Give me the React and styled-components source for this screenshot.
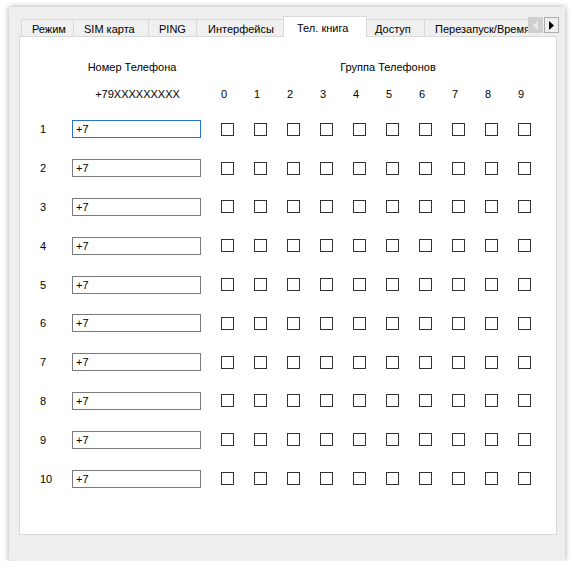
import React from 'react';
import styled, { createGlobalStyle } from 'styled-components';

const GlobalStyle = createGlobalStyle`
    html, body {
        margin: 0;
        padding: 0;
        background: #ffffff;
    }

    body {
        font-family: 'Liberation Sans', Arial, sans-serif;
        font-size: 11px;
        color: #000;
    }
`;

const Page = styled.div`
    padding: 7px 0 0 9px;
`;

const Window = styled.div`
    width: 556px;
    height: 554px;
    box-sizing: border-box;
    background: #eeeeee;
    box-shadow: 0 0 6px rgba(0, 0, 0, 0.35);
    padding: 9px 8px 26px 10px;
    display: flex;
    flex-direction: column;
`;

const TabBar = styled.div`
    display: flex;
    height: 21px;
    margin: 0 -2px -1px 0;
    position: relative;
    z-index: 1;
`;

const TabStrip = styled.div`
    flex: 1;
    display: flex;
    align-items: flex-end;
    padding-left: 2px;
    overflow: hidden;
`;

const Tab = styled.div`
    flex: none;
    box-sizing: border-box;
    width: ${p => p.$w}px;
    height: ${p => (p.$active ? 21 : 18)}px;
    margin: 0 ${p => (p.$active ? -2 : 0)}px;
    padding: ${p => (p.$active ? '2px' : '1px')} 0 0 ${p => p.$pad}px;
    white-space: nowrap;
    display: flex;
    align-items: center;
    background: ${p => (p.$active ? '#ffffff' : '#f0f0f0')};
    border: 1px solid #d9d9d9;
    border-bottom: ${p => (p.$active ? 'none' : '1px solid #d9d9d9')};
    border-left: ${p => (p.$first || p.$active ? '1px solid #d9d9d9' : 'none')};
    position: relative;
    z-index: ${p => (p.$active ? 2 : 1)};
`;

const ScrollButtons = styled.div`
    display: flex;
    gap: 1px;
    padding-top: 1px;
    align-self: flex-start;
`;

const ScrollButton = styled.div`
    width: 15px;
    height: 16px;
    box-sizing: border-box;
    display: flex;
    align-items: center;
    justify-content: center;
    background: ${p => (p.$disabled ? '#cfcfcf' : '#f0f0f0')};
    border: 1px solid ${p => (p.$disabled ? '#cfcfcf' : '#adadad')};
    color: ${p => (p.$disabled ? '#ececec' : '#000000')};
`;

const Pane = styled.div`
    flex: 1;
    background: #ffffff;
    border: 1px solid #d9d9d9;
    padding-top: 20px;
`;

const Grid = styled.div`
    display: grid;
    grid-template-columns: 32px 139px repeat(10, 33px);
    grid-template-rows: 20px 33px repeat(10, 38.8px);
    padding-left: 20px;
    align-items: center;
`;

const HeadCell = styled.div`
    grid-column: ${p => p.$col};
    text-align: center;
    padding: ${p => p.$pad || '0'};
    white-space: nowrap;
`;

const RowNum = styled.div`
    grid-column: 1;
`;

const PhoneInput = styled.input`
    grid-column: 2;
    justify-self: start;
    box-sizing: border-box;
    width: 129px;
    height: 18px;
    margin: 0;
    padding: 0 0 0 3px;
    font: inherit;
    color: #000;
    border: 1px solid ${p => (p.$focused ? '#2a74c6' : '#7a7a7a')};
    outline: none;
    background: #fff;
`;

const CheckCell = styled.div`
    display: flex;
    justify-content: center;
`;

const Check = styled.span`
    width: 13px;
    height: 13px;
    box-sizing: border-box;
    border: 1px solid #333333;
    background: #fff;
`;

const tabs = [
    { name: 'Режим', w: 53, pad: 10 },
    { name: 'SIM карта', w: 75, pad: 10 },
    { name: 'PING', w: 48, pad: 10 },
    { name: 'Интерфейсы', w: 88, pad: 11 },
    { name: 'Тел. книга', w: 84, pad: 13, active: true },
    { name: 'Доступ', w: 60, pad: 10 },
    { name: 'Перезапуск/Время', w: 110, pad: 10 },
];

const groups = [0, 1, 2, 3, 4, 5, 6, 7, 8, 9];
const rows = [1, 2, 3, 4, 5, 6, 7, 8, 9, 10];

const Arrow = ({ dir }) => (
    <svg width="5" height="9" viewBox="0 0 5 9">
        {dir === 'left'
            ? <polygon points="5,0 0,4.5 5,9" fill="currentColor" />
            : <polygon points="0,0 5,4.5 0,9" fill="currentColor" />}
    </svg>
);

const App = () => {
    return (
        <Page>
            <GlobalStyle />
            <Window>
                <TabBar>
                    <TabStrip>
                        {tabs.map((t, i) => (
                            <Tab key={t.name} $w={t.w} $pad={t.pad} $active={t.active} $first={i === 0}>
                                {t.name}
                            </Tab>
                        ))}
                    </TabStrip>
                    <ScrollButtons>
                        <ScrollButton $disabled><Arrow dir="left" /></ScrollButton>
                        <ScrollButton><Arrow dir="right" /></ScrollButton>
                    </ScrollButtons>
                </TabBar>
                <Pane>
                    <Grid>
                        <HeadCell $col="2" $pad="0 19px 0 0">Номер Телефона</HeadCell>
                        <HeadCell $col="3 / 13" $pad="0 0 0 24px">Группа Телефонов</HeadCell>

                        <HeadCell $col="2" $pad="0 8px 0 0">+79XXXXXXXXX</HeadCell>
                        {groups.map(g => (
                            <HeadCell key={g} $col={g + 3} $pad="0 7px 0 0">{g}</HeadCell>
                        ))}

                        {rows.map(r => (
                            <React.Fragment key={r}>
                                <RowNum>{r}</RowNum>
                                <PhoneInput defaultValue="+7" $focused={r === 1} readOnly />
                                {groups.map(g => (
                                    <CheckCell key={g}><Check /></CheckCell>
                                ))}
                            </React.Fragment>
                        ))}
                    </Grid>
                </Pane>
            </Window>
        </Page>
    );
};

export default App;
